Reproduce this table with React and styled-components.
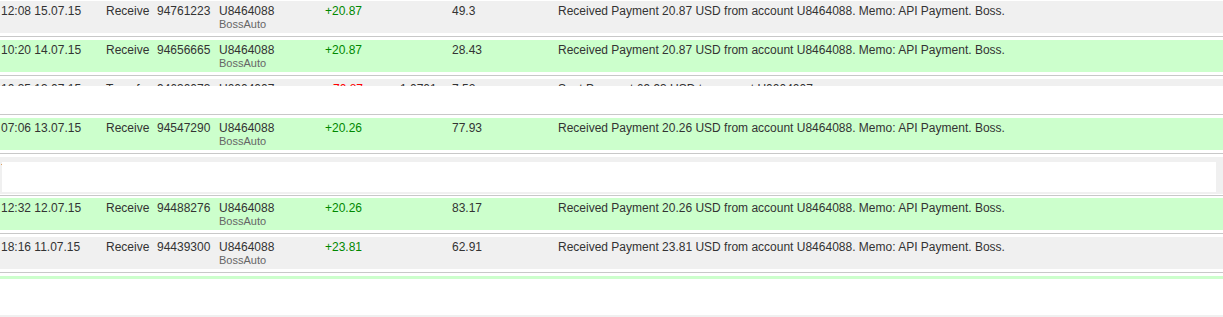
import React from "react";
import styled, { createGlobalStyle } from "styled-components";

const Global = createGlobalStyle`
  html, body { margin: 0; padding: 0; background: #fff; }
  body { font-family: "Liberation Sans", Arial, sans-serif; }
`;

const Page = styled.div`
  width: 1223px;
  height: 317px;
  overflow: hidden;
  display: flex;
  flex-direction: column;
  padding-top: 1px;
  box-sizing: border-box;
`;

const Row = styled.div`
  display: grid;
  grid-template-columns: 106px 51px 62px 106px 75px 52px 106px 1fr;
  height: ${(p) => p.$h || 32}px;
  overflow: hidden;
  flex-shrink: 0;
  background: ${(p) => (p.$variant === "green" ? "#ccffcc" : "#f0f0f0")};
  color: #333;
  font-size: 12px;
  line-height: 14px;
  padding-top: 3px;
  box-sizing: border-box;
  white-space: nowrap;
`;

const Cell = styled.div`
  padding-left: ${(p) => p.$pl || 0}px;
`;

const Sub = styled.div`
  font-size: 11px;
  line-height: 13px;
  color: #666;
`;

const Amount = styled.div`
  color: ${(p) => (p.$neg ? "#ff0000" : "#008800")};
  padding-left: ${(p) => (p.$neg ? 4 : 0)}px;
`;

const Sep = styled.div`
  flex-shrink: 0;
  padding: ${(p) => p.$top ?? 3}px 0 ${(p) => p.$bottom ?? 3}px;
  &::after {
    content: "";
    display: block;
    height: 1px;
    background: #c8c8c8;
  }
`;

const Blank = styled.div`
  flex-shrink: 0;
  height: ${(p) => p.$h}px;
`;

const Frame = styled.div`
  flex-shrink: 0;
  height: 37px;
  background: #f0f0f0;
  padding: 5px 7px 2px 2px;
  box-sizing: border-box;
  position: relative;
`;

const FrameInner = styled.div`
  height: 100%;
  background: #fff;
`;

const Dot = styled.span`
  position: absolute;
  left: 1px;
  top: 7px;
  width: 1px;
  height: 1px;
  background: #e0a060;
`;

const Thin = styled.div`
  flex-shrink: 0;
  height: ${(p) => p.$h}px;
  background: ${(p) => (p.$variant === "green" ? "#ccffcc" : "#f0f0f0")};
`;

const Tx = ({ variant, time, type, id, acc, amount, fee, balance, desc, h }) => (
  <Row $variant={variant} $h={h}>
    <Cell $pl={1}>{time}</Cell>
    <Cell>{type}</Cell>
    <Cell>{id}</Cell>
    <Cell>
      {acc}
      <Sub>BossAuto</Sub>
    </Cell>
    <Amount $neg={amount.startsWith("-")}>{amount}</Amount>
    <Cell>{fee}</Cell>
    <Cell>{balance}</Cell>
    <Cell>{desc}</Cell>
  </Row>
);

const recv = (a) =>
  `Received Payment ${a} USD from account U8464088. Memo: API Payment. Boss.`;

export default function App() {
  return (
    <>
      <Global />
      <Page>
        <Tx variant="gray" time="12:08 15.07.15" type="Receive" id="94761223" acc="U8464088" amount="+20.87" balance="49.3" desc={recv("20.87")} />
        <Sep />
        <Tx variant="green" time="10:20 14.07.15" type="Receive" id="94656665" acc="U8464088" amount="+20.87" balance="28.43" desc={recv("20.87")} />
        <Sep />
        <Tx variant="gray" h={7} time="10:35 13.07.15" type="Transfer" id="94630073" acc="U0004007" amount="-70.87" fee="1.0701" balance="7.52" desc="Sent Payment 69.93 USD to account U0004007" />
        <Blank $h={28} />
        <Sep $top={0} />
        <Tx variant="green" time="07:06 13.07.15" type="Receive" id="94547290" acc="U8464088" amount="+20.26" balance="77.93" desc={recv("20.26")} />
        <Sep />
        <Frame>
          <Dot />
          <FrameInner />
        </Frame>
        <Sep $top={1} $bottom={2} />
        <Tx variant="green" time="12:32 12.07.15" type="Receive" id="94488276" acc="U8464088" amount="+20.26" balance="83.17" desc={recv("20.26")} />
        <Sep />
        <Tx variant="gray" time="18:16 11.07.15" type="Receive" id="94439300" acc="U8464088" amount="+23.81" balance="62.91" desc={recv("23.81")} />
        <Sep />
        <Thin $variant="green" $h={3} />
        <Blank $h={36} />
        <Thin $variant="gray" $h={3} />
      </Page>
    </>
  );
}
